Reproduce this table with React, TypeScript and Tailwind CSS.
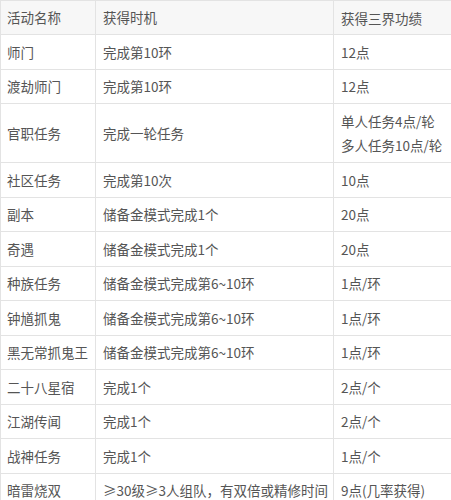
const rows: [string, string, string[]][] = [
  ["师门", "完成第10环", ["12点"]],
  ["渡劫师门", "完成第10环", ["12点"]],
  ["官职任务", "完成一轮任务", ["单人任务4点/轮", "多人任务10点/轮"]],
  ["社区任务", "完成第10次", ["10点"]],
  ["副本", "储备金模式完成1个", ["20点"]],
  ["奇遇", "储备金模式完成1个", ["20点"]],
  ["种族任务", "储备金模式完成第6~10环", ["1点/环"]],
  ["钟馗抓鬼", "储备金模式完成第6~10环", ["1点/环"]],
  ["黑无常抓鬼王", "储备金模式完成第6~10环", ["1点/环"]],
  ["二十八星宿", "完成1个", ["2点/个"]],
  ["江湖传闻", "完成1个", ["2点/个"]],
  ["战神任务", "完成1个", ["1点/个"]],
  ["暗雷烧双", "≥30级≥3人组队，有双倍或精修时间", ["9点(几率获得)"]],
];

function Row({ cells, header }: { cells: [string, string, string[]]; header?: boolean }) {
  const [a, b, c] = cells;
  const tall = c.length > 1;
  return (
    <div
      className={`grid grid-cols-[95px_238px_1fr] border-b border-[#e3e3e3] ${
        header ? "h-[34px] bg-[#f7f7f7]" : tall ? "h-[59px] bg-white" : "h-[34.5px] bg-white"
      }`}
    >
      <div className="flex items-center border-r border-[#e3e3e3] pl-[6px] whitespace-nowrap">{a}</div>
      <div className="flex items-center border-r border-[#e3e3e3] pl-[7px] whitespace-nowrap">{b}</div>
      <div className="flex flex-col justify-center pl-[7px] whitespace-nowrap leading-[24px]">
        {c.map((t) => (
          <span key={t}>{t}</span>
        ))}
      </div>
    </div>
  );
}

export default function App() {
  return (
    <div className="w-[451px] h-[500px] overflow-hidden bg-white">
      <div
        className="w-[470px] border-l border-t border-[#e3e3e3] text-[13.5px] text-[#555]"
        style={{ fontFamily: '"Noto Sans CJK SC", "Noto Sans", sans-serif' }}
      >
        <Row header cells={["活动名称", "获得时机", ["获得三界功绩"]]} />
        {rows.map((r) => (
          <Row key={r[0]} cells={r} />
        ))}
      </div>
    </div>
  );
}
